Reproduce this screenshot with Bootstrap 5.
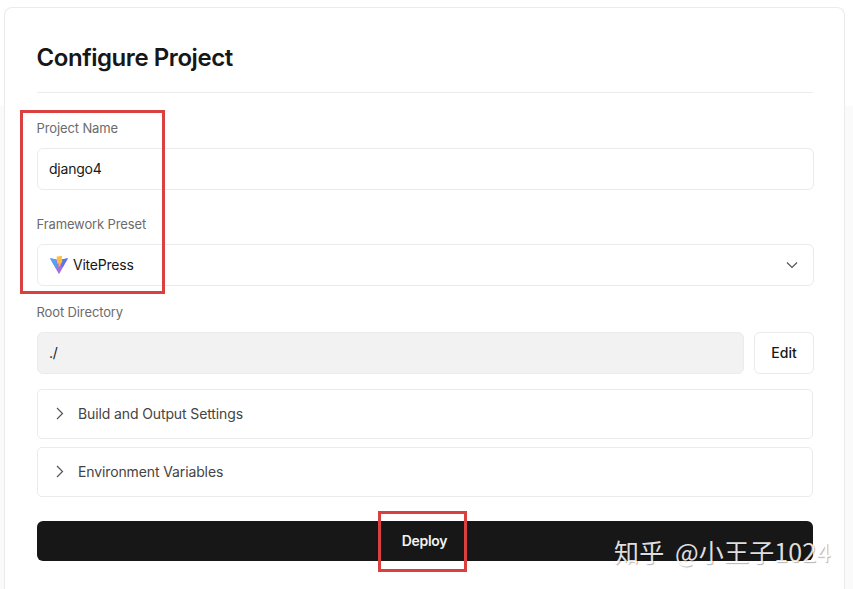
<!DOCTYPE html>
<html lang="en">
<head>
<meta charset="utf-8">
<title>Configure Project</title>
<link href="https://cdn.jsdelivr.net/npm/bootstrap@5.3.0/dist/css/bootstrap.min.css" rel="stylesheet">
<style>
html,body{height:589px;overflow:hidden}
body{font-family:Inter,"Liberation Sans",sans-serif;background:linear-gradient(#fff 0,#fff 106px,#fafafa 106px);position:relative}
.shell{padding:7px 8px 0 4px}
.panel{background:#fff;border:1px solid #ebebeb;border-bottom:0;border-radius:8px 8px 0 0;height:582px;padding:27px 31px 0 32px}
.heading{font-size:24px;font-weight:600;line-height:46px;letter-spacing:-.44px;color:#171717;margin:0 0 0 -.5px;padding-bottom:11px;border-bottom:1px solid #ebebeb;width:776px}
.fieldlabel{display:block;font-size:13px;line-height:20px;letter-spacing:-.12px;color:#6b6b6b;margin:0 0 10px -.5px}
.namelabel{margin-top:25px}
.presetlabel{margin-top:24px}
.rootlabel{margin-top:16px}
.fieldbox{height:42px;width:777px;border:1px solid #ebebeb;border-radius:6px;font-size:14px;letter-spacing:-.22px;color:#171717;padding:0 11px 2px;background:#fff}
.fieldbox.rootbox{width:708px;background:#f2f2f2}
.editbtn{width:60px;height:42px;border:1px solid #ebebeb;border-radius:6px;font-size:14px;font-weight:500;color:#171717;background:#fff;padding:0 0 2px}
.rootline{gap:10px;width:777px}
.vite{width:18px;height:18px;margin:1px 5px 0 1px;flex:none}
.caretdown{margin-left:auto;margin-right:4px;margin-top:2px}
.fold{height:50px;width:776px;border:1px solid #ebebeb;border-radius:5px;font-size:14px;letter-spacing:-.12px;color:#444;padding:0 0 2px 17px;gap:14px;background:#fff}
.firstfold{margin-top:15px}
.nextfold{margin-top:8px}
.deploy{margin-top:24px;height:40px;width:776px;background:#171717;color:#f2f2f2;border:0;border-radius:6px;font-size:14px;font-weight:600;letter-spacing:-.3px;padding:0 1px 2px 0}
.redbox{position:absolute;border:3px solid #d9403f;pointer-events:none}
.redone{left:20px;top:110px;width:145px;height:184px}
.redtwo{left:378px;top:511px;width:89px;height:61px}
.stamp{position:absolute;left:614px;top:533px;font-family:"Noto Sans CJK SC",sans-serif;font-size:25px;line-height:36px;word-spacing:5px;letter-spacing:.15px;color:#fff;opacity:.86;text-shadow:1px 1px 1px rgba(0,0,0,.35);white-space:nowrap}
</style>
</head>
<body>
<div class="shell">
  <div class="panel">
    <h1 class="heading">Configure Project</h1>
    <label class="fieldlabel namelabel">Project Name</label>
    <div class="fieldbox d-flex align-items-center">django4</div>
    <label class="fieldlabel presetlabel">Framework Preset</label>
    <div class="fieldbox d-flex align-items-center">
      <svg class="vite" viewBox="0 0 20 20" aria-hidden="true">
        <path d="M0 2.5 L7 4 L10 3 L13 4 L20 2.5 L10.5 19.5 Q10 20 9.5 19.5 Z" fill="#a66fe0"/>
        <path d="M0 2.5 L6.5 3.6 L8 12 L6.5 13.5 Z" fill="#4aa6f0"/>
        <path d="M20 2.5 L13.5 3.6 L12.5 12 L14 12.5 Z" fill="#5d74e8"/>
        <path d="M7.5 0.5 L13.5 0 L12.8 4 L14 5.5 L9.5 13 L9.8 8 L7.8 8.5 Z" fill="#fbbf3c"/>
      </svg>
      <span>VitePress</span>
      <svg class="caretdown" width="12" height="8" viewBox="0 0 12 8" aria-hidden="true"><path d="M1 1.5 L6 6.5 L11 1.5" fill="none" stroke="#555" stroke-width="1.2"/></svg>
    </div>
    <label class="fieldlabel rootlabel">Root Directory</label>
    <div class="d-flex rootline">
      <div class="fieldbox rootbox d-flex align-items-center">./</div>
      <button class="editbtn" type="button">Edit</button>
    </div>
    <div class="fold firstfold d-flex align-items-center">
      <svg width="9" height="13" viewBox="0 0 9 13" aria-hidden="true"><path d="M2 1 L7.5 6.5 L2 12" fill="none" stroke="#555" stroke-width="1.2"/></svg>
      <span>Build and Output Settings</span>
    </div>
    <div class="fold nextfold d-flex align-items-center">
      <svg width="9" height="13" viewBox="0 0 9 13" aria-hidden="true"><path d="M2 1 L7.5 6.5 L2 12" fill="none" stroke="#555" stroke-width="1.2"/></svg>
      <span>Environment Variables</span>
    </div>
    <button class="deploy d-block" type="button">Deploy</button>
  </div>
</div>
<div class="redbox redone"></div>
<div class="redbox redtwo"></div>
<div class="stamp">知乎 @小王子1024</div>
<script src="https://cdn.jsdelivr.net/npm/bootstrap@5.3.0/dist/js/bootstrap.bundle.min.js"></script>
</body>
</html>
